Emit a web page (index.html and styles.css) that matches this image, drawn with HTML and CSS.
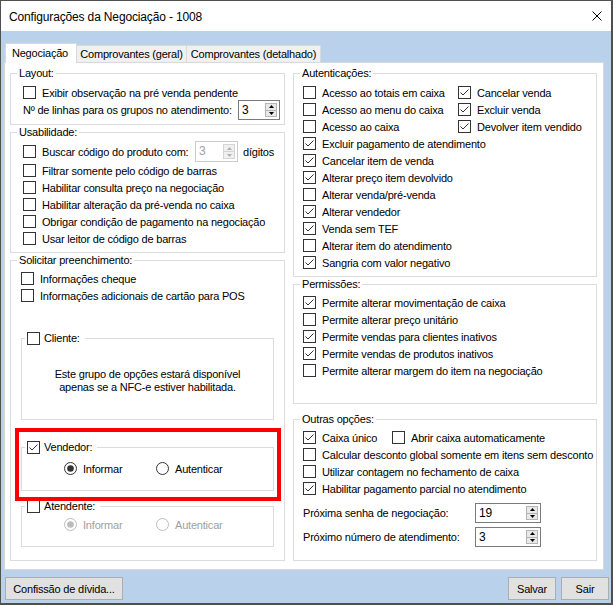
FILE: index.html
```html
<!DOCTYPE html>
<html lang="pt-BR">
<head>
<meta charset="utf-8">
<title>Configurações da Negociação - 1008</title>
<link rel="stylesheet" href="styles.css">
</head>
<body>
<div class="window">
  <div class="titlebar">
    <span class="title">Configurações da Negociação - 1008</span>
    <svg class="close" viewBox="0 0 10 10"><path d="M0.5 0.5 L9.5 9.5 M9.5 0.5 L0.5 9.5" stroke="#000" stroke-width="1" fill="none"/></svg>
  </div>
  <div class="client">
    <div class="tabs">
      <div class="tab active t1">Negociação</div>
      <div class="tab t2">Comprovantes (geral)</div>
      <div class="tab t3">Comprovantes (detalhado)</div>
    </div>
    <div class="panel">
      <div class="col col-left">
        <div class="group g-layout">
          <div class="gtitle">Layout:</div>
          <div class="rows pl12 mt3">
            <div class="row"><svg class="cb" viewBox="0 0 13 13"><rect x="0.5" y="0.5" width="12" height="12" fill="#fff" stroke="#333"/></svg><span>Exibir observação na pré venda pendente</span></div>
            <div class="row row-spin mtm1"><span class="lbl-linhas">Nº de linhas para os grupos no atendimento:</span>
              <div class="spin w42"><span class="spin-val">3</span><div class="spin-btns"><div class="spin-btn"><svg viewBox="0 0 5 3" class="tri"><path d="M2.5 0 L5 3 L0 3 Z" fill="#000"/></svg></div><div class="spin-btn"><svg viewBox="0 0 5 3" class="tri"><path d="M0 0 L5 0 L2.5 3 Z" fill="#000"/></svg></div></div></div>
            </div>
          </div>
        </div>

        <div class="group g-usab">
          <div class="gtitle">Usabilidade:</div>
          <div class="rows pl12 mt1">
            <div class="row row-spin21"><svg class="cb" viewBox="0 0 13 13"><rect x="0.5" y="0.5" width="12" height="12" fill="#fff" stroke="#333"/></svg><span class="lbl-buscar">Buscar código do produto com:</span>
              <div class="spin w43 disabled"><span class="spin-val">3</span><div class="spin-btns"><div class="spin-btn"><svg viewBox="0 0 5 3" class="tri"><path d="M2.5 0 L5 3 L0 3 Z" fill="#b0b0b0"/></svg></div><div class="spin-btn"><svg viewBox="0 0 5 3" class="tri"><path d="M0 0 L5 0 L2.5 3 Z" fill="#b0b0b0"/></svg></div></div></div>
              <span class="digitos">dígitos</span>
            </div>
            <div class="row"><svg class="cb" viewBox="0 0 13 13"><rect x="0.5" y="0.5" width="12" height="12" fill="#fff" stroke="#333"/></svg><span>Filtrar somente pelo código de barras</span></div>
            <div class="row"><svg class="cb" viewBox="0 0 13 13"><rect x="0.5" y="0.5" width="12" height="12" fill="#fff" stroke="#333"/></svg><span>Habilitar consulta preço na negociação</span></div>
            <div class="row"><svg class="cb" viewBox="0 0 13 13"><rect x="0.5" y="0.5" width="12" height="12" fill="#fff" stroke="#333"/></svg><span>Habilitar alteração da pré-venda no caixa</span></div>
            <div class="row"><svg class="cb" viewBox="0 0 13 13"><rect x="0.5" y="0.5" width="12" height="12" fill="#fff" stroke="#333"/></svg><span>Obrigar condição de pagamento na negociação</span></div>
            <div class="row"><svg class="cb" viewBox="0 0 13 13"><rect x="0.5" y="0.5" width="12" height="12" fill="#fff" stroke="#333"/></svg><span>Usar leitor de código de barras</span></div>
          </div>
        </div>

        <div class="group g-solic">
          <div class="gtitle">Solicitar preenchimento:</div>
          <div class="rows pl10 mt2">
            <div class="row"><svg class="cb" viewBox="0 0 13 13"><rect x="0.5" y="0.5" width="12" height="12" fill="#fff" stroke="#333"/></svg><span>Informações cheque</span></div>
            <div class="row"><svg class="cb" viewBox="0 0 13 13"><rect x="0.5" y="0.5" width="12" height="12" fill="#fff" stroke="#333"/></svg><span>Informações adicionais de cartão para POS</span></div>
          </div>

          <div class="subgroup sg-cliente">
            <div class="gtitle sgtitle"><svg class="cb" viewBox="0 0 13 13"><rect x="0.5" y="0.5" width="12" height="12" fill="#fff" stroke="#333"/></svg><span>Cliente:</span></div>
            <div class="nfce-msg">Este grupo de opções estará disponível<br>apenas se a NFC-e estiver habilitada.</div>
          </div>

          <div class="subgroup sg-vendedor">
            <div class="gtitle sgtitle"><svg class="cb" viewBox="0 0 13 13"><rect x="0.5" y="0.5" width="12" height="12" fill="#fff" stroke="#333"/><path d="M2.5 6.5 L5 9 L10.5 3.5" fill="none" stroke="#333"/></svg><span>Vendedor:</span></div>
            <div class="radios mt5">
              <div class="radio r1"><svg class="rb" viewBox="0 0 13 13"><circle cx="6.5" cy="6.5" r="6" fill="#fff" stroke="#333"/><circle cx="6.5" cy="6.5" r="3.3" fill="#333"/></svg><span>Informar</span></div>
              <div class="radio"><svg class="rb" viewBox="0 0 13 13"><circle cx="6.5" cy="6.5" r="6" fill="#fff" stroke="#333"/></svg><span>Autenticar</span></div>
            </div>
          </div>

          <div class="subgroup sg-atendente">
            <div class="gtitle sgtitle"><svg class="cb" viewBox="0 0 13 13"><rect x="0.5" y="0.5" width="12" height="12" fill="#fff" stroke="#333"/></svg><span>Atendente:</span></div>
            <div class="radios mt2 disabled">
              <div class="radio r1"><svg class="rb" viewBox="0 0 13 13"><circle cx="6.5" cy="6.5" r="6" fill="#fff" stroke="#bcbcbc"/><circle cx="6.5" cy="6.5" r="3.3" fill="#bcbcbc"/></svg><span>Informar</span></div>
              <div class="radio"><svg class="rb" viewBox="0 0 13 13"><circle cx="6.5" cy="6.5" r="6" fill="#fff" stroke="#bcbcbc"/></svg><span>Autenticar</span></div>
            </div>
          </div>

          <div class="highlight"></div>
        </div>
      </div>

      <div class="col col-right">
        <div class="group g-aut">
          <div class="gtitle">Autenticações:</div>
          <div class="rows pl9 mt3">
            <div class="row"><div class="cell c155"><svg class="cb" viewBox="0 0 13 13"><rect x="0.5" y="0.5" width="12" height="12" fill="#fff" stroke="#333"/></svg><span>Acesso ao totais em caixa</span></div><div class="cell"><svg class="cb" viewBox="0 0 13 13"><rect x="0.5" y="0.5" width="12" height="12" fill="#fff" stroke="#333"/><path d="M2.5 6.5 L5 9 L10.5 3.5" fill="none" stroke="#333"/></svg><span>Cancelar venda</span></div></div>
            <div class="row"><div class="cell c155"><svg class="cb" viewBox="0 0 13 13"><rect x="0.5" y="0.5" width="12" height="12" fill="#fff" stroke="#333"/></svg><span>Acesso ao menu do caixa</span></div><div class="cell"><svg class="cb" viewBox="0 0 13 13"><rect x="0.5" y="0.5" width="12" height="12" fill="#fff" stroke="#333"/><path d="M2.5 6.5 L5 9 L10.5 3.5" fill="none" stroke="#333"/></svg><span>Excluir venda</span></div></div>
            <div class="row"><div class="cell c155"><svg class="cb" viewBox="0 0 13 13"><rect x="0.5" y="0.5" width="12" height="12" fill="#fff" stroke="#333"/></svg><span>Acesso ao caixa</span></div><div class="cell"><svg class="cb" viewBox="0 0 13 13"><rect x="0.5" y="0.5" width="12" height="12" fill="#fff" stroke="#333"/><path d="M2.5 6.5 L5 9 L10.5 3.5" fill="none" stroke="#333"/></svg><span>Devolver item vendido</span></div></div>
            <div class="row"><svg class="cb" viewBox="0 0 13 13"><rect x="0.5" y="0.5" width="12" height="12" fill="#fff" stroke="#333"/><path d="M2.5 6.5 L5 9 L10.5 3.5" fill="none" stroke="#333"/></svg><span>Excluir pagamento de atendimento</span></div>
            <div class="row"><svg class="cb" viewBox="0 0 13 13"><rect x="0.5" y="0.5" width="12" height="12" fill="#fff" stroke="#333"/><path d="M2.5 6.5 L5 9 L10.5 3.5" fill="none" stroke="#333"/></svg><span>Cancelar item de venda</span></div>
            <div class="row"><svg class="cb" viewBox="0 0 13 13"><rect x="0.5" y="0.5" width="12" height="12" fill="#fff" stroke="#333"/><path d="M2.5 6.5 L5 9 L10.5 3.5" fill="none" stroke="#333"/></svg><span>Alterar preço item devolvido</span></div>
            <div class="row"><svg class="cb" viewBox="0 0 13 13"><rect x="0.5" y="0.5" width="12" height="12" fill="#fff" stroke="#333"/></svg><span>Alterar venda/pré-venda</span></div>
            <div class="row"><svg class="cb" viewBox="0 0 13 13"><rect x="0.5" y="0.5" width="12" height="12" fill="#fff" stroke="#333"/><path d="M2.5 6.5 L5 9 L10.5 3.5" fill="none" stroke="#333"/></svg><span>Alterar vendedor</span></div>
            <div class="row"><svg class="cb" viewBox="0 0 13 13"><rect x="0.5" y="0.5" width="12" height="12" fill="#fff" stroke="#333"/><path d="M2.5 6.5 L5 9 L10.5 3.5" fill="none" stroke="#333"/></svg><span>Venda sem TEF</span></div>
            <div class="row"><svg class="cb" viewBox="0 0 13 13"><rect x="0.5" y="0.5" width="12" height="12" fill="#fff" stroke="#333"/></svg><span>Alterar item do atendimento</span></div>
            <div class="row"><svg class="cb" viewBox="0 0 13 13"><rect x="0.5" y="0.5" width="12" height="12" fill="#fff" stroke="#333"/><path d="M2.5 6.5 L5 9 L10.5 3.5" fill="none" stroke="#333"/></svg><span>Sangria com valor negativo</span></div>
          </div>
        </div>

        <div class="group g-perm">
          <div class="gtitle">Permissões:</div>
          <div class="rows pl9 mt2">
            <div class="row"><svg class="cb" viewBox="0 0 13 13"><rect x="0.5" y="0.5" width="12" height="12" fill="#fff" stroke="#333"/><path d="M2.5 6.5 L5 9 L10.5 3.5" fill="none" stroke="#333"/></svg><span>Permite alterar movimentação de caixa</span></div>
            <div class="row"><svg class="cb" viewBox="0 0 13 13"><rect x="0.5" y="0.5" width="12" height="12" fill="#fff" stroke="#333"/></svg><span>Permite alterar preço unitário</span></div>
            <div class="row"><svg class="cb" viewBox="0 0 13 13"><rect x="0.5" y="0.5" width="12" height="12" fill="#fff" stroke="#333"/><path d="M2.5 6.5 L5 9 L10.5 3.5" fill="none" stroke="#333"/></svg><span>Permite vendas para clientes inativos</span></div>
            <div class="row"><svg class="cb" viewBox="0 0 13 13"><rect x="0.5" y="0.5" width="12" height="12" fill="#fff" stroke="#333"/><path d="M2.5 6.5 L5 9 L10.5 3.5" fill="none" stroke="#333"/></svg><span>Permite vendas de produtos inativos</span></div>
            <div class="row"><svg class="cb" viewBox="0 0 13 13"><rect x="0.5" y="0.5" width="12" height="12" fill="#fff" stroke="#333"/></svg><span>Permite alterar margem do item na negociação</span></div>
          </div>
        </div>

        <div class="group g-outras">
          <div class="gtitle">Outras opções:</div>
          <div class="rows pl9 mt2">
            <div class="row"><div class="cell c89"><svg class="cb" viewBox="0 0 13 13"><rect x="0.5" y="0.5" width="12" height="12" fill="#fff" stroke="#333"/><path d="M2.5 6.5 L5 9 L10.5 3.5" fill="none" stroke="#333"/></svg><span>Caixa único</span></div><div class="cell"><svg class="cb" viewBox="0 0 13 13"><rect x="0.5" y="0.5" width="12" height="12" fill="#fff" stroke="#333"/></svg><span>Abrir caixa automaticamente</span></div></div>
            <div class="row"><svg class="cb" viewBox="0 0 13 13"><rect x="0.5" y="0.5" width="12" height="12" fill="#fff" stroke="#333"/></svg><span>Calcular desconto global somente em itens sem desconto</span></div>
            <div class="row"><svg class="cb" viewBox="0 0 13 13"><rect x="0.5" y="0.5" width="12" height="12" fill="#fff" stroke="#333"/></svg><span>Utilizar contagem no fechamento de caixa</span></div>
            <div class="row"><svg class="cb" viewBox="0 0 13 13"><rect x="0.5" y="0.5" width="12" height="12" fill="#fff" stroke="#333"/><path d="M2.5 6.5 L5 9 L10.5 3.5" fill="none" stroke="#333"/></svg><span>Habilitar pagamento parcial no atendimento</span></div>
            <div class="row row-spin mt6"><span class="lbl-num">Próxima senha de negociação:</span>
              <div class="spin w66"><span class="spin-val">19</span><div class="spin-btns"><div class="spin-btn"><svg viewBox="0 0 5 3" class="tri"><path d="M2.5 0 L5 3 L0 3 Z" fill="#000"/></svg></div><div class="spin-btn"><svg viewBox="0 0 5 3" class="tri"><path d="M0 0 L5 0 L2.5 3 Z" fill="#000"/></svg></div></div></div>
            </div>
            <div class="row row-spin mt4"><span class="lbl-num">Próximo número de atendimento:</span>
              <div class="spin w66"><span class="spin-val">3</span><div class="spin-btns"><div class="spin-btn"><svg viewBox="0 0 5 3" class="tri"><path d="M2.5 0 L5 3 L0 3 Z" fill="#000"/></svg></div><div class="spin-btn"><svg viewBox="0 0 5 3" class="tri"><path d="M0 0 L5 0 L2.5 3 Z" fill="#000"/></svg></div></div></div>
            </div>
          </div>
        </div>
      </div>
    </div>
    <div class="footer">
      <button class="btn btn-confissao">Confissão de dívida...</button>
      <div class="spacer"></div>
      <button class="btn btn-small">Salvar</button>
      <button class="btn btn-small">Sair</button>
    </div>
  </div>
</div>
</body>
</html>
```

FILE: styles.css
```css
* { box-sizing: border-box; }
html, body { margin: 0; padding: 0; }
body {
  width: 613px;
  height: 605px;
  overflow: hidden;
  font-family: "Liberation Sans", Arial, sans-serif;
  font-size: 11px;
  letter-spacing: -0.2px;
  color: #000;
  background: #fff;
}
.window {
  width: 613px;
  height: 605px;
  border: 1px solid #505050;
  border-right-width: 2px;
  border-bottom-width: 2px;
  display: flex;
  flex-direction: column;
}
.titlebar {
  height: 30px;
  flex: none;
  background: #fff;
  display: flex;
  align-items: center;
  padding-left: 8px;
}
.title {
  flex: 1;
  font-size: 12px;
  letter-spacing: -0.15px;
  padding-top: 1px;
}
.close { width: 10px; height: 10px; margin-right: 9px; }

.client {
  flex: 1;
  background: #B9D1EA;
  padding: 12px 2px 0 3px;
  display: flex;
  flex-direction: column;
}
.tabs {
  display: flex;
  height: 20px;
  margin-left: 1px;
  margin-bottom: -1px;
  position: relative;
  z-index: 1;
  flex: none;
}
.tab {
  height: 17px;
  margin-top: 2px;
  background: #F0F0F0;
  border: 1px solid #D9D9D9;
  border-left: none;
  border-bottom: none;
  padding: 0;
  text-align: center;
  line-height: 16px;
  white-space: nowrap;
}
.tab.active {
  height: 20px;
  margin-top: 0;
  background: #fff;
  border-left: 1px solid #D9D9D9;
  line-height: 19px;
  padding-right: 2px;
}
.t1 { width: 72px; }
.t2 { width: 110px; }
.t3 { width: 134px; }
.panel {
  flex: none;
  width: 600px;
  height: 508px;
  background: #fff;
  border: 1px solid #D9D9D9;
  padding: 10px 6px 0 5px;
  display: flex;
  gap: 8px;
}
.col { display: flex; flex-direction: column; }
.col-left { width: 275px; }
.col-right { width: 304px; }

.group { border: 1px solid #DCDCDC; flex: none; }
.gtitle {
  width: max-content;
  height: 15px;
  line-height: 15px;
  margin: -8px 0 0 6px;
  padding: 0 2px;
  background: #fff;
  display: flex;
  align-items: center;
}
.g-layout { height: 52px; }
.g-usab { height: 121px; margin-top: 7px; }
.g-solic { height: 301px; margin-top: 7px; position: relative; }
.g-aut { height: 204px; }
.g-perm { height: 120px; margin-top: 7px; }
.g-outras { height: 142px; margin-top: 15px; }

.rows { display: flex; flex-direction: column; }
.pl12 { padding-left: 12px; }
.pl10 { padding-left: 10px; }
.pl9 { padding-left: 9px; }
.mt1 { margin-top: 1px; }
.mt2 { margin-top: 2px; }
.mt3 { margin-top: 3px; }
.mt4 { margin-top: 4px; }
.mt5 { margin-top: 5px; }
.mt6 { margin-top: 6px; }
.mtm1 { margin-top: -1px; }

.row {
  height: 17px;
  display: flex;
  align-items: center;
  white-space: nowrap;
}
.row-spin { height: 20px; }
.row-spin21 { height: 21px; }
.cell { display: flex; align-items: center; }
.c155 { width: 155px; }
.c89 { width: 89px; }
.cb { width: 13px; height: 13px; flex: none; margin-right: 6px; display: block; }
.rb { width: 13px; height: 13px; flex: none; margin-right: 6px; display: block; }

.lbl-linhas { width: 215px; flex: none; }
.lbl-buscar { width: 153px; flex: none; }
.lbl-num { width: 172px; flex: none; }
.digitos { margin-left: 5px; }

.spin {
  display: flex;
  height: 20px;
  border: 1px solid #7A7A7A;
  background: #fff;
  flex: none;
}
.w42 { width: 42px; }
.w43 { width: 43px; height: 21px; }
.w66 { width: 66px; }
.spin-val {
  flex: 1;
  padding-left: 3px;
  line-height: 18px;
  font-size: 12px;
}
.spin-btns {
  width: 14px;
  display: flex;
  flex-direction: column;
  padding: 2px 2px 2px 0;
}
.spin-btn {
  flex: 1;
  background: #E8E8E8;
  border: 1px solid #B5B5B5;
  display: flex;
  align-items: center;
  justify-content: center;
}
.spin-btn + .spin-btn { border-top: none; }
.tri { width: 5px; height: 3px; display: block; }
.spin.disabled { border-color: #CCCCCC; color: #A0A0A0; }
.spin.disabled .spin-btn { background: #F0F0F0; border-color: #D5D5D5; }

.subgroup {
  border: 1px solid #DCDCDC;
  margin-left: 10px;
  margin-right: 10px;
}
.sgtitle { margin-left: 3px; padding: 0 5px 0 2px; }
.sgtitle .cb { margin-right: 4px; }
.sg-cliente { height: 82px; margin-top: 34px; }
.sg-vendedor { height: 44px; margin-top: 27px; }
.sg-atendente { height: 41px; margin-top: 15px; }
.nfce-msg {
  margin-top: 22px;
  line-height: 13px;
  text-align: center;
}
.radios { display: flex; padding-left: 42px; height: 17px; }
.radio { display: flex; align-items: center; }
.r1 { width: 92px; }
.radios.disabled { color: #A0A0A0; }

.highlight {
  position: absolute;
  left: 4px;
  top: 167px;
  width: 266px;
  height: 73px;
  border: 4px solid #FF0000;
}

.footer {
  display: flex;
  margin-top: 7px;
  padding-left: 1px;
}
.spacer { flex: 1; }
.btn {
  height: 23px;
  background: #E1E1E1;
  border: 1px solid #ADADAD;
  font-family: "Liberation Sans", Arial, sans-serif;
  font-size: 11px;
  letter-spacing: -0.2px;
  color: #000;
  padding: 0;
}
.btn-confissao { width: 118px; }
.btn-small { width: 48px; margin-left: 5px; }
```
